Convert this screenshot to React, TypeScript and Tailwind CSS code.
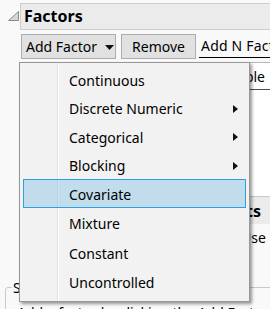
import React from "react";

type Item = { label: string; sub?: boolean; active?: boolean; h: string };

const items: Item[] = [
  { label: "Continuous", h: "h-[28.33px]" },
  { label: "Discrete Numeric", sub: true, h: "h-[28.33px]" },
  { label: "Categorical", sub: true, h: "h-[28.33px]" },
  { label: "Blocking", sub: true, h: "h-[28.33px]" },
  { label: "Covariate", active: true, h: "h-[29px]" },
  { label: "Mixture", h: "h-[29.5px]" },
  { label: "Constant", h: "h-[29.5px]" },
  { label: "Uncontrolled", h: "h-[29.5px]" },
];

function Radio() {
  return <span className="w-[13px] h-[13px] rounded-full border border-[#333] bg-white shrink-0" />;
}

export default function App() {
  return (
    <div className="relative w-[270px] h-[309px] overflow-hidden bg-[#f9f9f9] text-black font-['Noto_Sans',sans-serif]">
      {/* Factors header */}
      <div className="flex pt-[3px]">
        <div className="w-[20px] shrink-0 pt-[8px] pl-[8px]">
          <svg width="11" height="10" viewBox="0 0 11 10" className="block">
            <polygon points="0.5,9.5 10.5,0.5 10.5,9.5" fill="#d6d6d6" stroke="#8a8a8a" strokeWidth="1" />
          </svg>
        </div>
        <div className="flex-1 h-[27px] bg-[#ebebeb] border border-r-0 border-[#cdcdcd] pl-[3px] text-[16px] font-bold leading-[25px] whitespace-nowrap">
          Factors
        </div>
      </div>

      {/* Buttons */}
      <div className="flex mt-[4px] pl-[21px] h-[25px] text-[14px]">
        <button className="h-[25px] w-[95px] shrink-0 border border-[#adadad] bg-[#e1e1e1] flex items-center pl-[4px] pt-[1px] leading-none">
          <span>Add Factor</span>
          <svg width="9" height="5" viewBox="0 0 9 5" className="ml-[8px] block">
            <polygon points="0,0 9,0 4.5,5" fill="#111" />
          </svg>
        </button>
        <button className="ml-[5px] h-[25px] w-[75px] shrink-0 border border-[#adadad] bg-[#e1e1e1] flex items-center justify-center pt-[1px] leading-none">
          Remove
        </button>
        <div className="ml-[3px] h-[24px] flex-1 border-b border-black pl-[2px] leading-[23px] tracking-[0.2px] whitespace-nowrap overflow-hidden">
          Add N Factors
        </div>
      </div>

      {/* Factor table */}
      <div className="mt-[3px] ml-[20px] h-[134px] bg-white border-t border-[#b8b8b8]">
        <div className="h-[27px] border-b border-[#4d4d4d] flex items-center justify-end pr-[5px] text-[14px] whitespace-nowrap">
          Changeable
        </div>
      </div>

      {/* Constraints section */}
      <div className="ml-[20px] h-[28px] border-t border-[#c8c8c8] bg-[#ebebeb] flex items-center justify-end pr-[9px] text-[16px] font-bold whitespace-nowrap">
        Define Factor Constraints
      </div>
      <div className="mt-[4px] ml-[20px] h-[19px] flex items-center text-[14px] whitespace-nowrap">
        <div className="w-[204px] shrink-0 flex items-center gap-[4px] overflow-hidden">
          <Radio />
          <span>None</span>
          <Radio />
          <span>Specify Linear Constraints</span>
        </div>
        <Radio />
        <span className="ml-[4px]">Use Disallowed Combinations</span>
      </div>

      {/* Group box */}
      <fieldset className="mt-[31px] ml-[5px] border border-[#c9c9c9] rounded-[3px] px-[6px]">
        <legend className="px-[1px] text-[14px] leading-[19px]">Simulate Responses</legend>
        <div className="pl-[5px] pt-[6px] text-[14px] leading-[19px] whitespace-nowrap">
          Add a factor by clicking the Add Factor button.
        </div>
      </fieldset>

      {/* Dropdown menu */}
      <div className="absolute left-[19px] top-[62px] w-[231px] h-[240px] bg-[#f2f2f2] border border-[#979797] shadow-[2px_2px_3px_rgba(0,0,0,0.4)] px-[3px] pt-[3px]">
        <div className="absolute left-[37px] top-0 bottom-0 w-[2px] border-l border-[#e0e0e0] bg-white" />
        {items.map((it) => (
          <div
            key={it.label}
            className={
              "relative flex items-center pl-[45px] pr-[7px] pt-[1px] text-[14px] whitespace-nowrap border " +
              it.h +
              " " +
              (it.active ? "border-[#2b9fe0] bg-[#8fc8e6]/50" : "border-transparent")
            }
          >
            <span>{it.label}</span>
            {it.sub && (
              <svg width="5" height="8" viewBox="0 0 5 8" className="ml-auto block">
                <polygon points="0,0 5,4 0,8" fill="#111" />
              </svg>
            )}
          </div>
        ))}
      </div>
    </div>
  );
}
